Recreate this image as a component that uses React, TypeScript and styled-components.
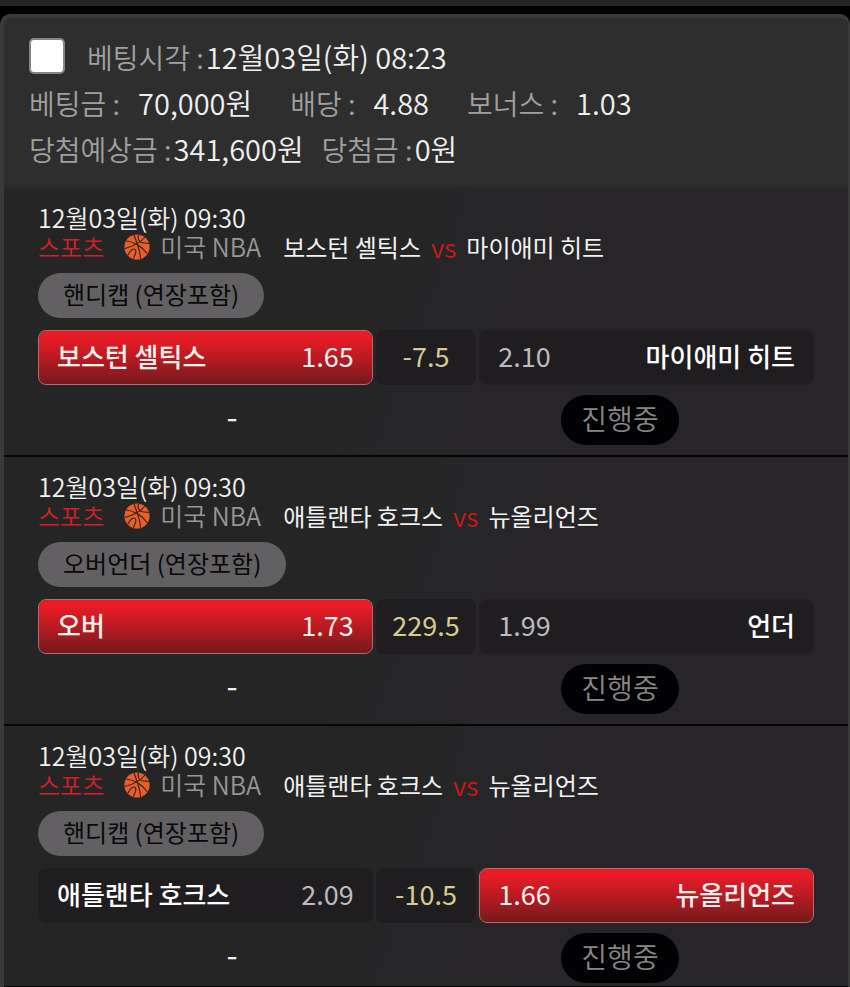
import React from "react";
import styled, { createGlobalStyle } from "styled-components";

const GlobalStyle = createGlobalStyle`
  * { box-sizing: border-box; }
  body {
    margin: 0;
    background: #000;
    color: #f2f2f2;
    font-family: "Noto Sans CJK KR", "Noto Sans", sans-serif;
  }
`;

const Page = styled.div`
  border-top: 6px solid #242424;
  padding-top: 8px;
`;

const Card = styled.main`
  border: solid #3a3a3a;
  border-width: 4px 2px 0 4px;
  border-radius: 10px 10px 0 0;
  background: #2e2e2e;
  overflow: hidden;
`;

const Summary = styled.header`
  display: flex;
  flex-direction: column;
  padding: 15px 25px 14px;
  font-size: 28px;
  line-height: 46px;
  border-bottom: 3px solid #2a2a2a;
`;

const SummaryRow = styled.div<{ $gap: number }>`
  display: flex;
  align-items: center;
  height: 46px;
  gap: ${(p) => p.$gap}px;
  white-space: pre;
`;

const Check = styled.input`
  appearance: none;
  width: 36px;
  height: 36px;
  margin: 0;
  border: 2px solid #858585;
  border-radius: 5px;
  background: #fff;

  &:checked {
    background: #e51c24;
  }
`;

const Caption = styled.span`
  color: #a0a0a0;
  font-weight: 350;
`;

const Value = styled.span<{ $inset?: boolean }>`
  color: #efefef;
  font-size: 29px;
  font-weight: 350;
  padding-left: ${(p) => (p.$inset ? 18 : 2)}px;
`;

const Match = styled.section`
  padding: 15px 34px 10px;
  background: linear-gradient(110deg, #252525 35%, #28252a 75%);
  border-bottom: 2px solid #050505;

  &:last-child {
    padding-bottom: 3px;
    border-bottom-width: 1px;
  }
`;

const StartTime = styled.div`
  font-size: 25px;
  line-height: 29px;
  font-weight: 350;
`;

const MatchTitle = styled.div`
  display: flex;
  align-items: center;
  font-size: 24px;
  line-height: 29px;
  white-space: nowrap;
`;

const Category = styled.span`
  color: #cf2228;
  font-weight: 350;
  margin-right: 20px;
`;

const League = styled.span`
  color: #979797;
  font-size: 25px;
  font-weight: 350;
  margin: 0 22px 0 10px;
`;

const Versus = styled.span`
  color: #cb1a1a;
  font-size: 26px;
  font-weight: 350;
  margin: 0 10px;
`;

const MarketTag = styled.div`
  width: fit-content;
  margin: 12px 0;
  padding: 0 25px 4px;
  border-radius: 23px;
  background: #626062;
  color: #080808;
  font-size: 24px;
  line-height: 41px;
`;

const Options = styled.div`
  display: grid;
  grid-template-columns: 10fr 3fr 10fr;
  gap: 3px;
`;

const Option = styled.button<{ $picked: boolean }>`
  display: flex;
  align-items: center;
  justify-content: space-between;
  height: 55px;
  padding: 0 18px 4px;
  border: 1px solid ${(p) => (p.$picked ? "#b8686b" : "#211f22")};
  border-radius: 8px;
  background: ${(p) =>
    p.$picked
      ? "linear-gradient(#e81c26 12%, #b91b22 50%, #731a1d) padding-box"
      : "#1f1d20"};
  color: ${(p) => (p.$picked ? "#fff0ee" : "#fff")};
  font: 500 26px/40px "Noto Sans CJK KR", sans-serif;
  cursor: pointer;
`;

const Odds = styled.span<{ $picked: boolean }>`
  color: ${(p) => (p.$picked ? "#fff0ee" : "#bcbabd")};
  font-size: 27px;
  font-weight: 400;
`;

const Line = styled.div`
  display: flex;
  align-items: center;
  justify-content: center;
  padding-bottom: 4px;
  border-radius: 8px;
  background: #1f1d20;
  color: #d5cb92;
  font-size: 27px;
`;

const StatusRow = styled.div`
  display: grid;
  grid-template-columns: 1fr 1fr;
  justify-items: center;
  align-items: start;
  margin-top: 10px;
  font-size: 28px;
  line-height: 46px;
`;

const Score = styled.span`
  font-size: 32px;
  line-height: 40px;
`;

const Status = styled.span`
  padding: 0 20px 4px;
  border-radius: 25px;
  background: #020103;
  color: #88868a;
  font-weight: 350;
`;

const Basketball = () => (
  <svg width="26" height="26" viewBox="0 0 26 26" aria-hidden="true">
    <circle cx="13" cy="13" r="12.6" fill="#e6602e" />
    <g fill="none" stroke="#44231c" strokeWidth="1.2" strokeLinecap="round">
      <path d="M2.500 7C9 7.500 18 12 23 19.500" />
      <path d="M10 1C12 7 16 15 16.500 24.500" />
      <path d="M20.500 3.500C17 8 10 12 1 14.500" />
      <path d="M14.500 1C13.500 4 14.500 7.500 17.500 8.500S22.500 9 25 9.500" />
      <path d="M4 21C6 16 10 13.500 11.500 16S10 22 9.500 24.500" />
    </g>
  </svg>
);

interface Bet {
  home: string;
  away: string;
  market: string;
  left: string;
  leftOdds: string;
  line: string;
  right: string;
  rightOdds: string;
  pick: "left" | "right";
}

const bets: Bet[] = [
  {
    home: "보스턴 셀틱스",
    away: "마이애미 히트",
    market: "핸디캡 (연장포함)",
    left: "보스턴 셀틱스",
    leftOdds: "1.65",
    line: "-7.5",
    right: "마이애미 히트",
    rightOdds: "2.10",
    pick: "left",
  },
  {
    home: "애틀랜타 호크스",
    away: "뉴올리언즈",
    market: "오버언더 (연장포함)",
    left: "오버",
    leftOdds: "1.73",
    line: "229.5",
    right: "언더",
    rightOdds: "1.99",
    pick: "left",
  },
  {
    home: "애틀랜타 호크스",
    away: "뉴올리언즈",
    market: "핸디캡 (연장포함)",
    left: "애틀랜타 호크스",
    leftOdds: "2.09",
    line: "-10.5",
    right: "뉴올리언즈",
    rightOdds: "1.66",
    pick: "right",
  },
];

const BetItem = ({ bet }: { bet: Bet }) => {
  const leftPicked = bet.pick === "left";
  return (
    <Match>
      <StartTime>12월03일(화) 09:30</StartTime>
      <MatchTitle>
        <Category>스포츠</Category>
        <Basketball />
        <League>미국 NBA</League>
        <span>{bet.home}</span>
        <Versus>vs</Versus>
        <span>{bet.away}</span>
      </MatchTitle>
      <MarketTag>{bet.market}</MarketTag>
      <Options>
        <Option type="button" $picked={leftPicked} aria-pressed={leftPicked}>
          <span>{bet.left}</span>
          <Odds $picked={leftPicked}>{bet.leftOdds}</Odds>
        </Option>
        <Line>{bet.line}</Line>
        <Option type="button" $picked={!leftPicked} aria-pressed={!leftPicked}>
          <Odds $picked={!leftPicked}>{bet.rightOdds}</Odds>
          <span>{bet.right}</span>
        </Option>
      </Options>
      <StatusRow>
        <Score>-</Score>
        <Status>진행중</Status>
      </StatusRow>
    </Match>
  );
};

export default function App() {
  return (
    <>
      <GlobalStyle />
      <Page>
        <Card>
          <Summary>
            <SummaryRow $gap={22}>
              <Check type="checkbox" id="bet" />
              <label htmlFor="bet">
                <Caption>베팅시각 :</Caption>
                <Value>12월03일(화) 08:23</Value>
              </label>
            </SummaryRow>
            <SummaryRow $gap={38}>
              <span>
                <Caption>베팅금 :</Caption>
                <Value $inset>70,000원</Value>
              </span>
              <span>
                <Caption>배당 :</Caption>
                <Value $inset>4.88</Value>
              </span>
              <span>
                <Caption>보너스 :</Caption>
                <Value $inset>1.03</Value>
              </span>
            </SummaryRow>
            <SummaryRow $gap={18}>
              <span>
                <Caption>당첨예상금 :</Caption>
                <Value>341,600원</Value>
              </span>
              <span>
                <Caption>당첨금 :</Caption>
                <Value>0원</Value>
              </span>
            </SummaryRow>
          </Summary>
          {bets.map((bet, i) => (
            <BetItem key={i} bet={bet} />
          ))}
        </Card>
      </Page>
    </>
  );
}
